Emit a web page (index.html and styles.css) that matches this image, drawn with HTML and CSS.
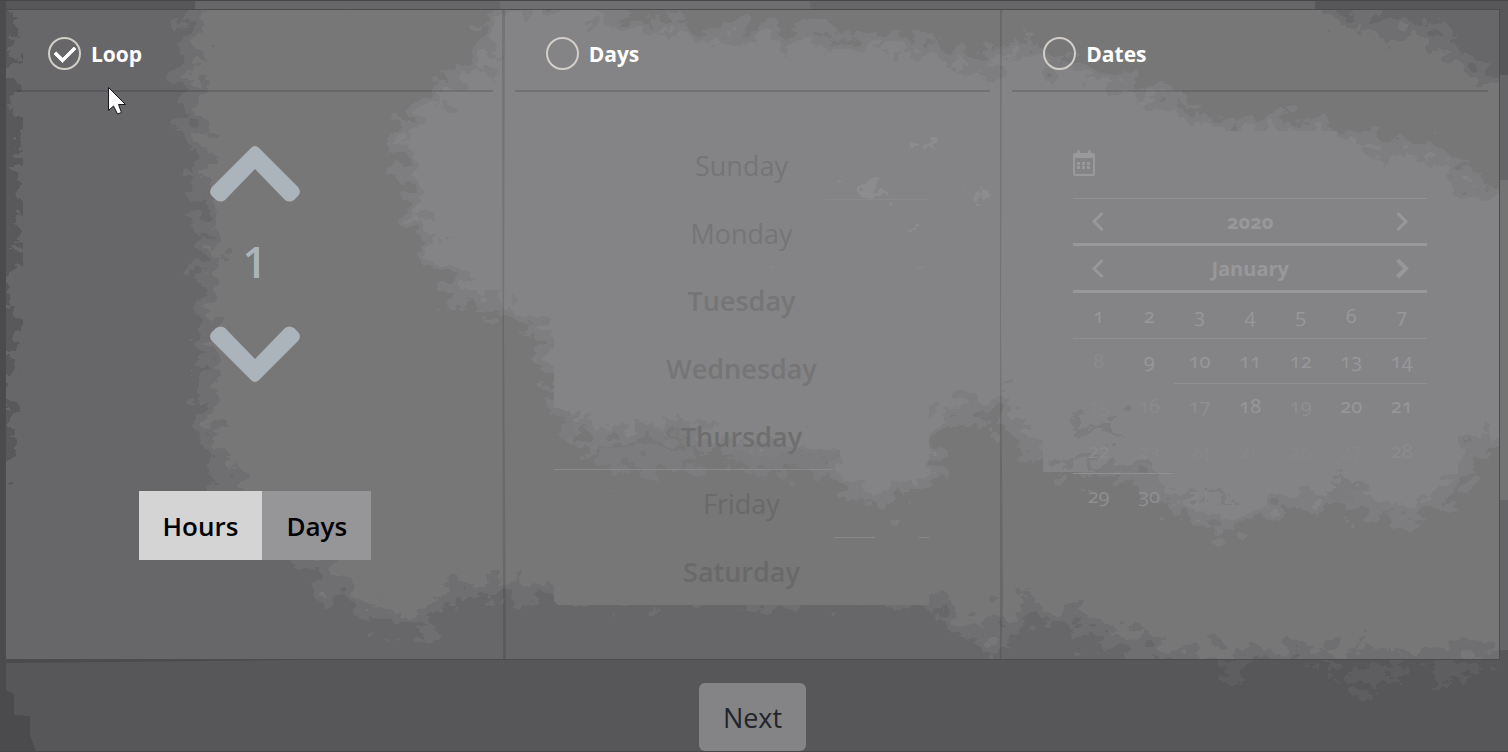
FILE: index.html
```html
<!DOCTYPE html>
<html lang="en">
<head>
<meta charset="utf-8">
<title>Schedule</title>
<link rel="stylesheet" href="styles.css">
</head>
<body>
<div class="page">
  <svg class="backdrop" viewBox="0 0 1508 752" preserveAspectRatio="none" aria-hidden="true">
    <defs>
      <filter id="rough" x="-5%" y="-5%" width="110%" height="110%" color-interpolation-filters="sRGB">
        <feTurbulence type="fractalNoise" baseFrequency="0.045 0.06" numOctaves="4" seed="8" result="n"/>
        <feDisplacementMap in="SourceGraphic" in2="n" scale="60" xChannelSelector="R" yChannelSelector="G"/>
      </filter>
    </defs>
    <rect width="1508" height="752" fill="#575759"/>
    <path d="M195 0H1508V10H195Z" fill="#666668"/>
    <path d="M500 0H810V10H500Z" fill="#6e6e70"/>
    <path d="M1315 0H1508V80H1499V10H1315Z" fill="#575759"/>
    <path d="M1499 75H1508V180H1499Z" fill="#666668"/>
    <path d="M1499 180H1508V500H1499Z" fill="#747475"/>
    <path d="M1499 500H1508V650H1499Z" fill="#666668"/>
    <path d="M0 0H6V659L300 660L6 663V690L14 694V715L30 716V735L36 752H0Z" fill="#4b4b4d"/>
    <path filter="url(#rough)" d="M1215 655H1250V675L1235 680H1225ZM1355 662H1400V685H1372V700H1358ZM1425 660H1485V682H1430ZM1310 665H1340V672H1310Z" fill="#5e5e60"/>
    <path d="M0 0H1508V1H0ZM0 751H1508V752H0Z" fill="#464648"/>
  </svg>
  <main class="panels">
    <svg class="backdrop" viewBox="6 10 1493 649" preserveAspectRatio="none" aria-hidden="true">
      <rect x="6" y="10" width="1493" height="649" fill="#676769"/>
      <path filter="url(#rough)" d="M-30 -20H14V85L20 120V270L12 280V410L4 420V480H-30Z" fill="#59595b"/>
      <path filter="url(#rough)" fill="#777777" stroke="#6f6f71" stroke-width="16" d="M195 -20L188 100L204 200L208 300L204 420L225 485L265 515L320 575L360 610L420 625L450 590L506 590L560 595L760 590L935 600L950 622L1005 640L1010 610L1060 612L1115 640L1180 658L1530 655V85L1470 70L1440 35L1345 20L1325 -20Z"/>
      <path filter="url(#rough)" fill="#848486" stroke="#7e7e80" stroke-width="14" d="M500 0L484 60L440 90L398 130L408 190L436 270L470 300L510 310L540 330L562 400L585 440L670 425L730 455L810 445L850 490L890 500L925 480L940 415L1005 400L1010 435L1065 470L1140 475L1190 515L1230 530L1290 500L1350 500L1390 520L1455 490L1475 440L1530 440V190L1480 195L1455 160L1370 140L1290 128L1200 122L1160 95L1080 70L1010 42L990 70L930 45L790 35L640 26L600 5Z"/>
      <path d="M554 285H580V395L570 410H554ZM900 130H929V460L915 478H900ZM1043 400H1110V472H1043ZM1170 131H1337V160H1170ZM1420 200H1458V474H1420Z" fill="#848486"/>
      <path d="M554 500H835V540H929V605H558L554 601Z" fill="#777777"/>
      <path filter="url(#rough)" fill="#7c7c7e" d="M560 405H580V430H560ZM635 425H665V435H635ZM600 445H700V470H600ZM740 455H830V470H740ZM1085 420H1115V435H1085ZM1060 460H1150V470H1060ZM1200 490H1230V500H1200ZM1330 480H1360V500H1330Z"/>
      <path filter="url(#rough)" fill="#8c8c8e" d="M845 178H860L870 188H888V196H850ZM912 142H930V150H912ZM975 190H986V200H975ZM906 222H918V230H906Z"/>
      <path d="M825 199H929V200H825ZM770 267H775V268H770ZM916 267H925V268H916ZM554 469H833V470H554ZM834 537H875V538H834ZM919 537H929V538H919Z" fill="#8a8a8c"/>
      <path d="M502 10H505L504 330L506 659H503ZM1000 10H1002L1001 320L1003 600L1001 659H1000Z" fill="#000" opacity=".12"/>
    </svg>

    <section class="panel">
      <header class="panel-head">
        <input class="pick" type="radio" name="mode" id="mode-loop" checked>
        <label for="mode-loop">Loop</label>
        <svg class="cursor" viewBox="0 0 18 28" aria-hidden="true"><path d="M.5 .5V23.500L5.500 19L9.500 27L13.500 25.500L10.500 17.500H17.500Z" fill="#fff" stroke="#16161e"/></svg>
      </header>
      <div class="loop">
        <button class="step" type="button" aria-label="Increase"><svg viewBox="0 0 90 56"><path d="M45 0Q47 0 49 2L88 41Q92 46 88 50L84 54Q79 57 75 54L45 23L15 54Q11 57 6 54L2 50Q-2 46 2 41L41 2Q43 0 45 0Z"/></svg></button>
        <output class="count">1</output>
        <button class="step" type="button" aria-label="Decrease"><svg viewBox="0 0 90 56"><path d="M45 56Q43 56 41 54L2 15Q-2 10 2 6L6 2Q11 -1 15 2L45 33L75 2Q79 -1 84 2L88 6Q92 10 88 15L49 54Q47 56 45 56Z"/></svg></button>
        <div class="units">
          <button class="unit unit-on" type="button">Hours</button>
          <button class="unit" type="button">Days</button>
        </div>
      </div>
    </section>

    <section class="panel">
      <header class="panel-head">
        <input class="pick" type="radio" name="mode" id="mode-days">
        <label for="mode-days">Days</label>
      </header>
      <div class="week">
        <button class="day thin" type="button">Sunday</button>
        <button class="day thin" type="button">Monday</button>
        <button class="day" type="button">Tuesday</button>
        <button class="day" type="button">Wednesday</button>
        <button class="day mid" type="button">Thursday</button>
        <button class="day low thin" type="button">Friday</button>
        <button class="day low" type="button">Saturday</button>
      </div>
    </section>

    <section class="panel">
      <header class="panel-head">
        <input class="pick" type="radio" name="mode" id="mode-dates">
        <label for="mode-dates">Dates</label>
      </header>
      <div class="dates">
        <svg class="cal" viewBox="0 0 22 26" aria-hidden="true"><path fill-rule="evenodd" d="M4 3V1Q5.500 -1 7 1V3H15V1Q16.500 -1 18 1V3H20Q22 3 22 5V24Q22 26 20 26H2Q0 26 0 24V5Q0 3 2 3ZM2 8V24H20V8Z"/><path d="M4 12h3v3h-3zM9 12h3v3h-3zM14 12h3v3h-3zM4 16h3v3h-3zM9 16h3v3h-3zM14 16h3v3h-3z"/></svg>
        <div class="nav nav-year">
          <button type="button" aria-label="Previous year"><svg viewBox="0 0 13 21"><path d="M11.500 2L3 10.500L11.500 19"/></svg></button>
          <span>2020</span>
          <button type="button" aria-label="Next year"><svg viewBox="0 0 13 21"><path d="M1.500 2L10 10.500L1.500 19"/></svg></button>
        </div>
        <div class="nav">
          <button type="button" aria-label="Previous month"><svg viewBox="0 0 13 21"><path d="M11.500 2L3 10.500L11.500 19"/></svg></button>
          <span>January</span>
          <button type="button" aria-label="Next month"><svg class="bold" viewBox="0 0 13 21"><path d="M1.500 2L10 10.500L1.500 19"/></svg></button>
        </div>
        <table class="month">
          <tr><td>1</td><td>2</td><td>3</td><td>4</td><td>5</td><td>6</td><td>7</td></tr>
          <tr><td class="f2 b0">8</td><td class="b0">9</td><td>10</td><td>11</td><td>12</td><td>13</td><td>14</td></tr>
          <tr><td class="f3 b0">15</td><td class="f2 b0">16</td><td class="f1 b0">17</td><td class="b0">18</td><td class="f1 b0">19</td><td class="b0">20</td><td class="b0">21</td></tr>
          <tr><td class="f2">22</td><td class="f3">23</td><td class="f3 b0">24</td><td class="f3 b0">25</td><td class="f3 b0">26</td><td class="f3 b0">27</td><td class="f2 b0">28</td></tr>
          <tr><td class="f1">29</td><td class="f1">30</td><td class="f3">31</td></tr>
        </table>
      </div>
    </section>
  </main>
  <footer class="foot"><button class="next" type="button">Next</button></footer>
</div>
</body>
</html>
```
FILE: styles.css
```css
* { box-sizing: border-box; }
body {
  margin: 0;
  font-family: "Open Sans", "Noto Sans", sans-serif;
  background: #575759;
  font-variant-numeric: oldstyle-nums;
}
button { border: 0; background: none; padding: 0; font: inherit; color: inherit; }
svg { display: block; }
.page {
  position: relative;
  min-height: 100vh;
  display: flex;
  flex-direction: column;
  padding: 10px 9px 0 6px;
}
.backdrop { position: absolute; top: 0; left: 0; width: 100%; height: 100%; }
.panels {
  position: relative;
  flex: 1;
  display: grid;
  grid-template-columns: repeat(3, 1fr);
  overflow: hidden;
  box-shadow: 0 0 0 1px #4c4c4e;
}
.panel { position: relative; padding: 0 11px; display: flex; flex-direction: column; }
.panel-head {
  position: relative;
  display: flex;
  align-items: center;
  gap: 10px;
  height: 82px;
  padding: 6px 31px 0;
  border-bottom: 2px solid rgba(0, 0, 0, .13);
}
.panel-head label { padding-top: 2px; color: #fff; font-size: 21px; font-weight: 700; line-height: 32px; }
.pick {
  appearance: none;
  width: 33px;
  height: 33px;
  margin: 0;
  border: 2px solid #d3cec8;
  border-radius: 50%;
  display: grid;
  place-items: center;
}
.pick:checked::after {
  content: "";
  width: 16px;
  height: 9px;
  margin-bottom: 4px;
  border: solid #fff;
  border-width: 0 0 4px 4px;
  border-radius: 1px;
  rotate: -45deg;
}
.cursor { position: absolute; left: 91px; top: 77px; width: 18px; height: 28px; z-index: 2; }
.loop { display: flex; flex-direction: column; align-items: center; padding-top: 54px; }
.step svg { width: 90px; height: 56px; fill: #abb4bb; }
.count {
  height: 124px;
  line-height: 120px;
  color: #abb4bb;
  font-size: 43px;
  font-weight: 600;
  font-variant-numeric: lining-nums;
}
.units { display: flex; margin-top: 109px; }
.unit {
  height: 69px;
  padding: 0 24px;
  background: #969698;
  color: #000;
  font-size: 26px;
  font-weight: 600;
}
.unit-on { background: #d4d4d4; }
.week {
  flex: 1;
  margin: 40px 61px 54px 39px;
  display: grid;
  grid-template-rows: repeat(7, 1fr);
}
.day { color: #757576; font-size: 27px; font-weight: 600; }
.day.thin { font-weight: 500; }
.day.mid { color: #6e6e6f; }
.day.low { color: #696969; }
.dates { padding: 58px 61px 0; }
.cal { width: 22px; height: 26px; fill: #99999b; }
.nav {
  display: flex;
  justify-content: space-between;
  align-items: center;
  height: 47px;
  padding: 0 18px;
  border-bottom: 3px solid #98989a;
  color: #98989a;
  font-size: 20px;
  font-weight: 700;
}
.nav-year { margin-top: 22px; height: 48px; border-top: 1px solid #919193; }
.nav svg { width: 13px; height: 21px; fill: none; stroke: #98989a; stroke-width: 3; }
.nav svg.bold { stroke-width: 4; }
.month { width: 100%; border-collapse: collapse; table-layout: fixed; color: #98989a; font-size: 20px; }
.month td { height: 45px; padding: 0; text-align: center; border-bottom: 1px solid #909092; }
.month tr:last-child td, .month td.b0 { border-bottom: 0; }
.month td.f1 { color: #8f8f91; }
.month td.f2 { color: #8b8b8d; }
.month td.f3 { color: #87878a; }
.foot { position: relative; display: flex; justify-content: center; padding: 24px 0 1px; }
.next {
  height: 68px;
  padding: 0 24px;
  border-radius: 6px;
  background: #848486;
  color: #22252a;
  font-size: 27px;
}
```
